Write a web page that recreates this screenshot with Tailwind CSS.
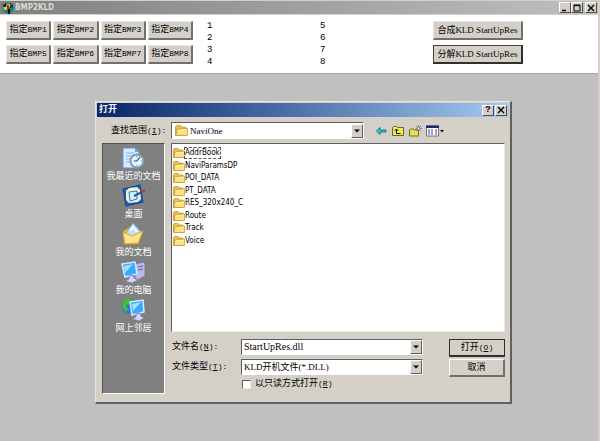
<!DOCTYPE html>
<html lang="zh-CN">
<head>
  <meta charset="UTF-8" />
  <meta name="viewport" content="width=device-width, initial-scale=1.0" />
  <title>BMP2KLD</title>
  <script src="https://cdn.jsdelivr.net/npm/@tailwindcss/browser@4"></script>
</head>
<body class="relative min-h-screen flex flex-col bg-[#c0c0c0] border-r-2 border-[#d4d0c8] text-black text-[9px] leading-3 font-['Liberation_Mono','Noto_Sans_CJK_SC',monospace]">

  <!-- shared icons -->
  <svg class="hidden">
    <symbol id="folder" viewBox="0 0 12 12">
      <path d="M.5 2.500 1.500 1.500h3.500l1 1.500h4v7.500h-9.500z" fill="#efc04a" stroke="#b98a24" stroke-width=".7"/>
      <path d="M1 10.500 2 5l9.500-1v6.500z" fill="#ffe07c" stroke="#c2932c" stroke-width=".7"/>
      <path d="M2.500 6 10.500 5" stroke="#fffbe0" stroke-width=".8"/>
    </symbol>
    <symbol id="close" viewBox="0 0 8 8">
      <path d="M1 1 7 7M7 1 1 7" stroke="#000" stroke-width="1.400"/>
    </symbol>
    <symbol id="down" viewBox="0 0 6 4">
      <path d="M0 .5h6L3 3.500z" fill="#000"/>
    </symbol>
  </svg>

  <header class="flex items-center h-[15px] pl-[2px] pr-px border-t border-b border-[#d4d0c8] bg-linear-to-r from-[#808080] to-[#c0c0c0]">
    <svg class="w-3 h-3" viewBox="0 0 12 12">
      <circle cx="6" cy="6" r="5.500" fill="#128080"/>
      <path d="M1 3 4 1v3L1 7z" fill="#082f35"/>
      <path d="M8 1l3 2v3H8z" fill="#0b4a4f"/>
      <path d="M1 5h3l1-3h3v3H6l-1 3H2z" fill="#d9d02c"/>
      <path d="M5 3h2v5H5z" fill="#b42c16"/>
      <path d="M6 7h2v5H6z" fill="#111"/>
    </svg>
    <h1 class="flex-1 ml-px font-['DejaVu_Sans_Condensed',sans-serif] font-bold text-[8px] text-[#dcdad2]">BMP2KLD</h1>
    <button aria-label="最小化" class="flex items-center justify-center w-3 h-[11px] bg-[#d4d0c8] border border-t-white border-l-white border-r-[#505050] border-b-[#505050]">
      <svg class="w-2 h-2" viewBox="0 0 8 8"><path d="M1 6.500h4" stroke="#000" stroke-width="1.500"/></svg>
    </button>
    <button aria-label="最大化" class="flex items-center justify-center w-3 h-[11px] bg-[#d4d0c8] border border-t-white border-l-white border-r-[#505050] border-b-[#505050]">
      <svg class="w-2 h-2" viewBox="0 0 8 8"><path d="M1 1h6v6H1zM1 1.700h6" fill="none" stroke="#000"/></svg>
    </button>
    <button aria-label="关闭" class="flex items-center justify-center w-3 h-[11px] ml-[2px] bg-[#d4d0c8] border border-t-white border-l-white border-r-[#505050] border-b-[#505050]">
      <svg class="w-2 h-2"><use href="#close"/></svg>
    </button>
  </header>

  <main class="flex h-[59px] pt-[6px] pl-[6px] bg-white border-b border-[#a8a8a8]">
    <div class="grid grid-cols-4 content-start gap-x-[2px] gap-y-[5px] w-[187px]">
      <button class="h-[19px] whitespace-nowrap bg-[#d4d0c8] border border-t-[#e8e6e0] border-l-[#e8e6e0] border-r-2 border-b-2 border-r-[#707070] border-b-[#707070]">指定<span class="text-[8px]">BMP1</span></button>
      <button class="h-[19px] whitespace-nowrap bg-[#d4d0c8] border border-t-[#e8e6e0] border-l-[#e8e6e0] border-r-2 border-b-2 border-r-[#707070] border-b-[#707070]">指定<span class="text-[8px]">BMP2</span></button>
      <button class="h-[19px] whitespace-nowrap bg-[#d4d0c8] border border-t-[#e8e6e0] border-l-[#e8e6e0] border-r-2 border-b-2 border-r-[#707070] border-b-[#707070]">指定<span class="text-[8px]">BMP3</span></button>
      <button class="h-[19px] whitespace-nowrap bg-[#d4d0c8] border border-t-[#e8e6e0] border-l-[#e8e6e0] border-r-2 border-b-2 border-r-[#707070] border-b-[#707070]">指定<span class="text-[8px]">BMP4</span></button>
      <button class="h-[19px] whitespace-nowrap bg-[#d4d0c8] border border-t-[#e8e6e0] border-l-[#e8e6e0] border-r-2 border-b-2 border-r-[#707070] border-b-[#707070]">指定<span class="text-[8px]">BMP5</span></button>
      <button class="h-[19px] whitespace-nowrap bg-[#d4d0c8] border border-t-[#e8e6e0] border-l-[#e8e6e0] border-r-2 border-b-2 border-r-[#707070] border-b-[#707070]">指定<span class="text-[8px]">BMP6</span></button>
      <button class="h-[19px] whitespace-nowrap bg-[#d4d0c8] border border-t-[#e8e6e0] border-l-[#e8e6e0] border-r-2 border-b-2 border-r-[#707070] border-b-[#707070]">指定<span class="text-[8px]">BMP7</span></button>
      <button class="h-[19px] whitespace-nowrap bg-[#d4d0c8] border border-t-[#e8e6e0] border-l-[#e8e6e0] border-r-2 border-b-2 border-r-[#707070] border-b-[#707070]">指定<span class="text-[8px]">BMP8</span></button>
    </div>
    <div class="w-[113px] ml-[14px] -mt-px">
      <p>1</p><p>2</p><p>3</p><p>4</p>
    </div>
    <div class="w-[113px] -mt-px">
      <p>5</p><p>6</p><p>7</p><p>8</p>
    </div>
    <div class="flex flex-col gap-[5px] w-[90px] font-['Liberation_Serif','Noto_Sans_CJK_SC',serif]">
      <button class="h-[19px] whitespace-nowrap bg-[#d4d0c8] border border-t-[#e8e6e0] border-l-[#e8e6e0] border-r-2 border-b-2 border-r-[#707070] border-b-[#707070]">合成KLD StartUpRes</button>
      <button class="h-[19px] whitespace-nowrap bg-[#d4d0c8] border border-t-[#404040] border-l-[#404040] border-r-2 border-b-2 border-r-[#303030] border-b-[#303030]">分解KLD StartUpRes</button>
    </div>
  </main>

  <!-- open file dialog -->
  <section role="dialog" aria-label="打开" class="absolute left-[95px] top-[101px] w-[417px] p-px bg-[#d4d0c8] border border-t-[#e8e6e0] border-l-[#e8e6e0] border-r-2 border-b-2 border-r-[#606060] border-b-[#606060]">
    <div class="flex items-center h-[14px] pl-[2px] pr-[2px] bg-linear-to-r from-[#0a246a] to-[#a6caf0]">
      <h2 class="flex-1 font-bold text-white">打开</h2>
      <button aria-label="帮助" class="flex items-center justify-center w-3 h-[11px] bg-[#d4d0c8] border border-t-white border-l-white border-r-[#505050] border-b-[#505050] text-[9px] font-bold">?</button>
      <button aria-label="关闭" class="flex items-center justify-center w-3 h-[11px] ml-px bg-[#d4d0c8] border border-t-white border-l-white border-r-[#505050] border-b-[#505050]">
        <svg class="w-2 h-2"><use href="#close"/></svg>
      </button>
    </div>

    <form class="pl-[5px] pr-[4px] pt-[5px] pb-[7px]">
      <div class="flex items-center h-[17px]">
        <label for="look" class="w-[69px] pl-[9px] whitespace-nowrap">查找范围<span class="text-[8px]">(<u>I</u>):</span></label>
        <div class="flex items-center w-[193px] h-[17px] pl-[3px] bg-white border border-t-[#606060] border-l-[#606060] border-r-white border-b-white">
          <svg class="w-[13px] h-[13px]"><use href="#folder"/></svg>
          <select id="look" class="flex-1 h-3 pl-[2px] appearance-none font-['Liberation_Serif',serif] text-[9px] leading-3 outline-none"><option>NaviOne</option></select>
          <span class="flex items-center justify-center w-3 h-[14px] bg-[#d4d0c8] border border-t-white border-l-white border-r-[#606060] border-b-[#606060] pointer-events-none"><svg class="w-[6px] h-1"><use href="#down"/></svg></span>
        </div>
        <button type="button" aria-label="后退" class="ml-3">
          <svg class="w-[11px] h-3" viewBox="0 0 11 12"><path d="M.5 6 4 2.500V5h6v2H4v2.500z" fill="#18dce4" stroke="#174e68" stroke-width=".8"/></svg>
        </button>
        <button type="button" aria-label="向上一级" class="ml-[5px]">
          <svg class="w-3 h-3" viewBox="0 0 12 12"><path d="M.5 10.500v-8l1-1h3l1 1h6v8z" fill="#f0e65c" stroke="#5c571e" stroke-width=".9"/><path d="M4.500 4v4.500h4M2.800 5.800 4.500 4l1.700 1.800" fill="none" stroke="#111"/></svg>
        </button>
        <button type="button" aria-label="新建文件夹" class="ml-[5px]">
          <svg class="w-[13px] h-3" viewBox="0 0 13 12"><path d="M.5 11V5l1-1h3l1 1h4v6z" fill="#e9df55" stroke="#66601f" stroke-width=".9"/><path d="M9.500 0v7M6.500 3.500h6.500M7.300 1l4.500 5M12 1 7.500 5.700" stroke="#555" stroke-width=".7"/><circle cx="9.600" cy="3.500" r="1" fill="#fff"/></svg>
        </button>
        <button type="button" aria-label="查看" class="ml-1">
          <svg class="w-[18px] h-3" viewBox="0 0 18 12"><path d="M.5 1h12v10H.5z" fill="#fff" stroke="#555" stroke-width=".8"/><path d="M0 .5h13V3H0z" fill="#18296f"/><path d="M2 5h2m1 0h2m2 0h2M2 7h2m1 0h2m2 0h2M2 9h2m1 0h2m2 0h2" stroke="#34449c"/><path d="M14 5h4l-2 2.500z" fill="#111"/></svg>
        </button>
      </div>

      <div class="flex mt-[4px]">
        <nav class="flex flex-col items-center w-[63px] h-[251px] pt-px mr-[6px] bg-[#808080] border border-t-[#505050] border-l-[#505050] border-r-white border-b-white text-white whitespace-nowrap">
          <a href="#" class="flex flex-col items-center h-[38px]">
            <svg class="w-6 h-[26px]" viewBox="0 0 24 26">
              <path d="M2 3h12l4 4v16H2z" fill="#d7ebff" stroke="#5b93d9"/><path d="M14 3v4h4z" fill="#68a7e8"/>
              <path d="M5 8h8M5 11h8M5 14h6M5 17h5" stroke="#86b5eb"/>
              <circle cx="16" cy="16" r="6.500" fill="#dff5ff" stroke="#8496a5" stroke-width="1.800"/>
              <path d="M16 16 19 12M16 16h-3" stroke="#234e78" stroke-width="1.200"/><path d="M16 11v1M16 20v1M20 16h1" stroke="#159bd2"/>
            </svg>
            <span>我最近的文档</span>
          </a>
          <a href="#" class="flex flex-col items-center h-[38px]">
            <svg class="w-6 h-[26px]" viewBox="0 0 24 26">
              <path d="M1 6 18 2l3 17-17 4z" fill="#1863c7" stroke="#0b408f"/>
              <path d="M4 8l3-3 8-1 3 3 1 9-3 3-9 1-3-3z" fill="#f5f1c9"/>
              <path d="M7 9l8-1v8l-7 2z" fill="#d2edff" stroke="#237fd1"/>
              <path d="m12 13 8-4" stroke="#245c9d" stroke-width="2"/><path d="m20 9 3-2" stroke="#d13820" stroke-width="2.500"/>
            </svg>
            <span>桌面</span>
          </a>
          <a href="#" class="flex flex-col items-center h-[38px]">
            <svg class="w-6 h-[26px]" viewBox="0 0 24 26">
              <path d="m2 10 8-5 11 6-3 12H3z" fill="#edbb3f" stroke="#bd8927"/>
              <path d="m5 12 7-10 8 9-5 9z" fill="#b9e2ff" stroke="#69a7dc"/><path d="m9 10 3-4 4 5" fill="none" stroke="#fff" stroke-width="2"/>
              <path d="m2 11 9 4 11-5-5 12-13 1z" fill="#ffe48c" stroke="#d9a63a"/>
            </svg>
            <span>我的文档</span>
          </a>
          <a href="#" class="flex flex-col items-center h-[38px]">
            <svg class="w-6 h-[26px]" viewBox="0 0 24 26">
              <path d="m14 5 8-2 2 2v12l-7 4-3-2z" fill="#b9b9e7" stroke="#7774b5"/><path d="m17 8 5-1M17 11l5-1" stroke="#625fae"/>
              <path d="m1 5 13-2 2 12-12 3z" fill="#37aaff" stroke="#d5e8ff" stroke-width="1.500"/><path d="m3 7 9-2-8 9z" fill="#a1e0ff"/>
              <path d="m8 17 4-1 1 3 4 2-6 3-7-2 4-2z" fill="#d4d4f3" stroke="#8582b6"/>
            </svg>
            <span>我的电脑</span>
          </a>
          <a href="#" class="flex flex-col items-center h-[38px]">
            <svg class="w-6 h-[26px]" viewBox="0 0 24 26">
              <circle cx="8" cy="9" r="7.500" fill="#287bd1"/><path d="M2 4 7 1l5 2-3 4-4 1 2 4-2 3-4-5z" fill="#47ba37"/>
              <path d="m9 5 13-2 1 12-12 3z" fill="#37aaff" stroke="#d5e8ff" stroke-width="1.500"/><path d="m11 7 9-2-8 9z" fill="#a1e0ff"/>
              <path d="m15 17 4-1 1 3 3 2-5 3-7-2 4-2z" fill="#d4d4f3" stroke="#8582b6"/>
            </svg>
            <span>网上邻居</span>
          </a>
        </nav>

        <div class="flex-1">
          <ul class="grid content-start grid-rows-[repeat(8,1fr)] h-[189px] pt-[3px] pb-[84px] pl-px bg-white border border-t-[#606060] border-l-[#606060] border-r-[#ece9e2] border-b-[#ece9e2] font-['DejaVu_Sans_Condensed',sans-serif] text-[8px] leading-[10px]">
            <li class="flex items-center"><svg class="w-3 h-3"><use href="#folder"/></svg><span class="outline outline-dashed outline-[#555]">AddrBook</span></li>
            <li class="flex items-center"><svg class="w-3 h-3"><use href="#folder"/></svg>NaviParamsDP</li>
            <li class="flex items-center"><svg class="w-3 h-3"><use href="#folder"/></svg>POI_DATA</li>
            <li class="flex items-center"><svg class="w-3 h-3"><use href="#folder"/></svg>PT_DATA</li>
            <li class="flex items-center"><svg class="w-3 h-3"><use href="#folder"/></svg>RES_320x240_C</li>
            <li class="flex items-center"><svg class="w-3 h-3"><use href="#folder"/></svg>Route</li>
            <li class="flex items-center"><svg class="w-3 h-3"><use href="#folder"/></svg>Track</li>
            <li class="flex items-center"><svg class="w-3 h-3"><use href="#folder"/></svg>Voice</li>
          </ul>

          <div class="flex justify-between mt-[7px]">
            <div class="grid grid-cols-[70px_182px] gap-y-[4px] items-center">
              <label for="file" class="pl-px whitespace-nowrap">文件名<span class="text-[8px]">(<u>N</u>):</span></label>
              <div class="flex items-center h-4 bg-white border border-t-[#606060] border-l-[#606060] border-r-white border-b-white">
                <input id="file" type="text" value="StartUpRes.dll" class="flex-1 min-w-0 h-3 pl-[2px] font-['Liberation_Serif',serif] text-[10px] leading-3 outline-none" />
                <span class="flex items-center justify-center w-3 h-[14px] bg-[#d4d0c8] border border-t-white border-l-white border-r-[#606060] border-b-[#606060] pointer-events-none"><svg class="w-[6px] h-1"><use href="#down"/></svg></span>
              </div>
              <label for="type" class="pl-px whitespace-nowrap">文件类型<span class="text-[8px]">(<u>T</u>):</span></label>
              <div class="flex items-center h-4 bg-white border border-t-[#606060] border-l-[#606060] border-r-white border-b-white">
                <select id="type" class="flex-1 min-w-0 h-3 pl-[2px] appearance-none font-['Liberation_Serif','Noto_Sans_CJK_SC',serif] text-[9px] leading-3 outline-none"><option>KLD开机文件(*.DLL)</option></select>
                <span class="flex items-center justify-center w-3 h-[14px] bg-[#d4d0c8] border border-t-white border-l-white border-r-[#606060] border-b-[#606060] pointer-events-none"><svg class="w-[6px] h-1"><use href="#down"/></svg></span>
              </div>
              <div class="col-start-2 flex items-center h-[10px] whitespace-nowrap">
                <input id="readonly" type="checkbox" class="appearance-none w-[9px] h-[9px] ml-px bg-white border border-t-[#606060] border-l-[#606060] border-r-[#ece9e2] border-b-[#ece9e2]" />
                <label for="readonly" class="ml-1">以只读方式打开<span class="text-[8px]">(<u>R</u>)</span></label>
              </div>
            </div>
            <div class="flex flex-col gap-[2px] w-[56px]">
              <button type="submit" class="h-[18px] bg-[#d4d0c8] border border-[#303030] border-b-2">打开<span class="text-[8px]">(<u>O</u>)</span></button>
              <button type="button" class="h-[18px] bg-[#d4d0c8] border border-t-white border-l-white border-r-2 border-b-2 border-r-[#707070] border-b-[#707070]">取消</button>
            </div>
          </div>
        </div>
      </div>
    </form>
  </section>
</body>
</html>
